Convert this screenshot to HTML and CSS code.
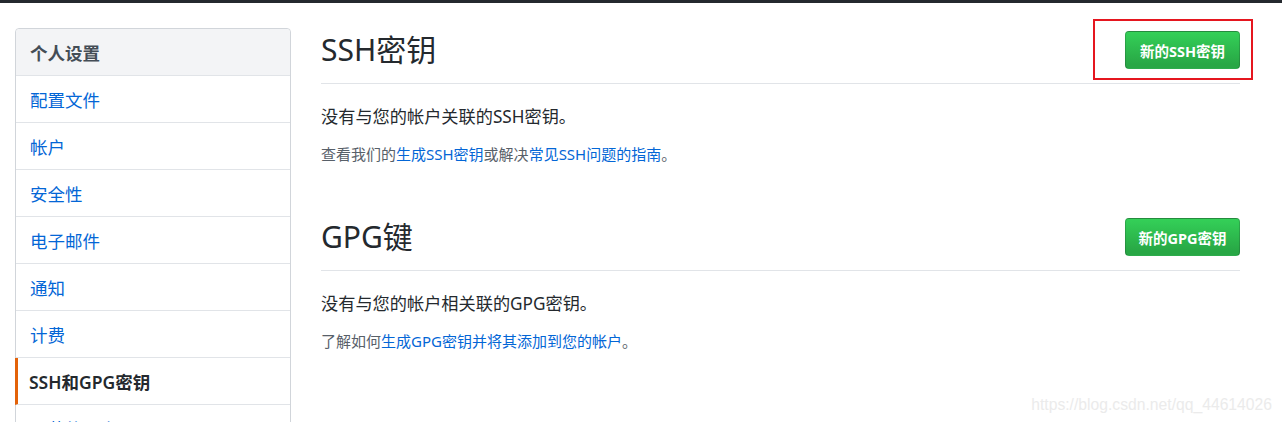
FILE: index.html
```html
<!DOCTYPE html>
<html lang="zh-CN">
<head>
  <meta charset="UTF-8" />
  <title>SSH和GPG密钥</title>
  <link rel="stylesheet" href="styles.css">
</head>
<body>
  <div class="topbar"></div>

  <div class="page">
    <!-- Settings menu -->
    <nav class="menu">
      <div class="menu-heading">个人设置</div>
      <a class="menu-item">配置文件</a>
      <a class="menu-item">帐户</a>
      <a class="menu-item">安全性</a>
      <a class="menu-item">电子邮件</a>
      <a class="menu-item">通知</a>
      <a class="menu-item">计费</a>
      <a class="menu-item selected">SSH和GPG密钥</a>
      <a class="menu-item">屏蔽的用户</a>
    </nav>

    <!-- Keys -->
    <div class="main">
      <div class="subhead">
        <h2>SSH密钥</h2>
        <button class="btn marked">新的SSH密钥</button>
      </div>
      <p class="lead">没有与您的帐户关联的SSH密钥。</p>
      <p class="note">查看我们的<a>生成SSH密钥</a>或解决<a>常见SSH问题的指南</a>。</p>

      <div class="subhead spaced">
        <h2>GPG键</h2>
        <button class="btn">新的GPG密钥</button>
      </div>
      <p class="lead">没有与您的帐户相关联的GPG密钥。</p>
      <p class="note">了解如何<a>生成GPG密钥并将其添加到您的帐户</a>。</p>
    </div>
  </div>

  <div class="watermark">https://blog.csdn.net/qq_44614026</div>
</body>
</html>
```

FILE: styles.css
```css
* { box-sizing: border-box; }
body {
  margin: 0;
  background: #fff;
  color: #24292e;
  font-family: "Noto Sans", "Noto Sans CJK SC", sans-serif;
  height: 422px;
  overflow: hidden;
}

.topbar {
  height: 3px;
  background: #24292e;
}

.page {
  display: flex;
  gap: 30px;
  padding: 25px 0 0 15px;
}

/* Settings menu */
.menu {
  width: 276px;
  flex-shrink: 0;
  border: 1px solid #d1d5da;
  border-radius: 4px;
  display: flex;
  flex-direction: column;
}

.menu-heading,
.menu-item {
  height: 47px;
  padding: 0 14px;
  display: flex;
  align-items: center;
  border-bottom: 1px solid #e1e4e8;
  font-size: 17.5px;
}

.menu-heading {
  background: #f3f4f6;
  color: #444d56;
  font-weight: bold;
  border-radius: 4px 4px 0 0;
}

.menu-item {
  color: #0366d6;
  cursor: pointer;
}

.menu-item.selected {
  color: #24292e;
  font-weight: 600;
  border-left: 3px solid #e36209;
  padding-left: 11px;
  margin-left: -1px;
}

/* Main column */
.main {
  width: 919px;
}

.subhead {
  display: flex;
  align-items: center;
  justify-content: space-between;
  padding: 3px 0 14px;
  border-bottom: 1px solid #e1e4e8;
}

.subhead.spaced { margin-top: 50px; }

.subhead h2 {
  margin: 0;
  font-size: 30px;
  font-weight: normal;
  line-height: 38px;
}

.btn {
  position: relative;
  width: 115px;
  height: 38px;
  padding: 0;
  border: 1px solid rgba(27, 31, 35, 0.2);
  border-radius: 4px;
  background: linear-gradient(#34d058, #28a745 90%);
  color: #fff;
  font-family: inherit;
  font-size: 14.5px;
  font-weight: bold;
  cursor: pointer;
}

/* red annotation box drawn over the screenshot */
.btn.marked::after {
  content: "";
  position: absolute;
  top: -13px;
  right: -14px;
  bottom: -12px;
  left: -33px;
  border: 2px solid #e5161f;
}

.lead {
  margin: 20px 0 0;
  font-size: 17.2px;
  line-height: 26px;
}

.note {
  margin: 13px 0 0;
  font-size: 15px;
  line-height: 22px;
  color: #586069;
}

.note a { color: #0366d6; cursor: pointer; }

.watermark {
  position: absolute;
  right: 10px;
  bottom: 8px;
  font-family: "Liberation Sans", Arial, sans-serif;
  font-size: 15.7px;
  color: #ebebeb;
}
```
